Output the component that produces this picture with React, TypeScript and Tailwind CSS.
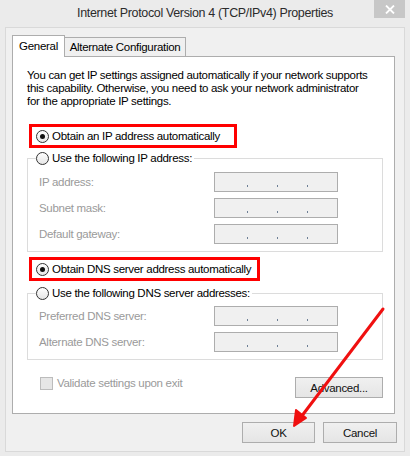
import React from "react";

function Radio({ checked }: { checked?: boolean }) {
  return (
    <span className="flex h-[13px] w-[13px] shrink-0 items-center justify-center rounded-full border border-[#333333] bg-gradient-to-b from-[#ffffff] to-[#e6e6e6]">
      {checked && <span className="h-[5px] w-[5px] rounded-full bg-[#111111]" />}
    </span>
  );
}

function IpField() {
  return (
    <div className="flex h-[20px] w-[124px] shrink-0 items-end border border-[#adadad] bg-[#f0f0f0] pb-[4px] pl-[32px]">
      <span className="h-[2px] w-[1px] bg-[#6d7f95]" />
      <span className="ml-[29px] h-[2px] w-[1px] bg-[#6d7f95]" />
      <span className="ml-[29px] h-[2px] w-[1px] bg-[#6d7f95]" />
    </div>
  );
}

function Row({ label }: { label: string }) {
  return (
    <div className="flex h-[20px] items-center pl-[11px]">
      <span className="w-[175px] text-[#9a9a9a]">{label}</span>
      <IpField />
    </div>
  );
}

function Button({ children, w }: { children: React.ReactNode; w: string }) {
  return (
    <div
      className={`flex h-[21px] ${w} items-center justify-center border border-[#adadad] bg-gradient-to-b from-[#f0f0f0] to-[#e5e5e5] text-[#111111]`}
    >
      {children}
    </div>
  );
}

export default function App() {
  return (
    <div className="relative h-[456px] w-[410px] overflow-hidden whitespace-nowrap bg-[#ebebeb] font-['Liberation_Sans',Arial,sans-serif] text-[11.5px] leading-[14px] tracking-[-0.3px] text-black">
      {/* title bar */}
      <div className="relative flex h-[27px] items-center justify-center pb-[2px]">
        <span className="text-[12.5px] tracking-[-0.35px] text-[#2b2b2b]">Internet Protocol Version 4 (TCP/IPv4) Properties</span>
        <div className="absolute right-[5px] top-0 flex h-[18px] w-[31px] items-center justify-center bg-[#c7c7c7]">
          <svg width="10" height="9" viewBox="0 0 10 9">
            <path d="M1 0.5 L9 8.5 M9 0.5 L1 8.5" stroke="#ffffff" strokeWidth="1.8" />
          </svg>
        </div>
      </div>

      {/* panel */}
      <div className="mx-[5px] flex h-[425px] flex-col border border-[#d9d9d9] bg-[#f0f0f0] pl-[6px] pr-[9px] pt-[7px]">
        {/* tabs */}
        <div className="relative z-10 flex h-[21px] items-end">
          <div className="-mb-px flex h-[22px] w-[53px] items-center justify-center border border-b-0 border-[#adadad] bg-white pb-[2px]">
            General
          </div>
          <div className="-ml-px flex h-[19px] w-[122px] items-center justify-center border border-b-0 border-[#adadad] bg-[#f0f0f0] pb-[1px]">
            Alternate Configuration
          </div>
        </div>

        {/* content */}
        <div className="flex h-[358px] flex-col border border-[#adadad] bg-white pl-[14px] pr-[11px] pt-[12px]">
          <p className="leading-[13px]">
            You can get IP settings assigned automatically if your network supports
            <br />
            this capability. Otherwise, you need to ask your network administrator
            <br />
            for the appropriate IP settings.
          </p>

          <div className="ml-[2px] mt-[16px] flex h-[24px] w-[208px] items-center gap-[3px] border-[3px] border-[#ff0000] pl-[4px]">
            <Radio checked />
            <span>Obtain an IP address automatically</span>
          </div>

          <fieldset className="mt-[3px] border border-[#dcdcdc] px-0 pb-[7px] pt-[7px]">
            <legend className="ml-[8px] flex h-[14px] items-center gap-[3px] pr-[2px]">
              <Radio />
              <span>Use the following IP address:</span>
            </legend>
            <div className="flex flex-col gap-[6px]">
              <Row label="IP address:" />
              <Row label="Subnet mask:" />
              <Row label="Default gateway:" />
            </div>
          </fieldset>

          <div className="ml-[2px] mt-[5px] flex h-[24px] w-[231px] items-center gap-[3px] border-[3px] border-[#ff0000] pl-[4px]">
            <Radio checked />
            <span>Obtain DNS server address automatically</span>
          </div>

          <fieldset className="mt-[5px] border border-[#dcdcdc] px-0 pb-[7px] pt-[6px]">
            <legend className="ml-[8px] flex h-[14px] items-center gap-[3px] pr-[2px]">
              <Radio />
              <span>Use the following DNS server addresses:</span>
            </legend>
            <div className="flex flex-col gap-[6px]">
              <Row label="Preferred DNS server:" />
              <Row label="Alternate DNS server:" />
            </div>
          </fieldset>

          <div className="mt-[16px] flex items-start justify-between">
            <div className="ml-[13px] flex items-center gap-[4px]">
              <span className="h-[13px] w-[13px] border border-[#bcbcbc] bg-[#e6e6e6]" />
              <span className="text-[#9a9a9a]">Validate settings upon exit</span>
            </div>
            <div className="mt-[1px]">
              <Button w="w-[88px]">Advanced...</Button>
            </div>
          </div>
        </div>

        {/* bottom buttons */}
        <div className="-mr-[2px] mt-[8px] flex justify-end gap-[8px]">
          <Button w="w-[73px]">OK</Button>
          <Button w="w-[74px]">Cancel</Button>
        </div>
      </div>

      {/* red arrow overlay */}
      <svg className="pointer-events-none absolute inset-0" width="410" height="456" viewBox="0 0 410 456">
        <path d="M383 309 L298 421" stroke="#f01010" strokeWidth="3" strokeLinecap="round" />
        <path d="M294 426 L296 410 L306 418 Z" fill="#f01010" stroke="#f01010" strokeWidth="2" strokeLinejoin="round" />
      </svg>
    </div>
  );
}
